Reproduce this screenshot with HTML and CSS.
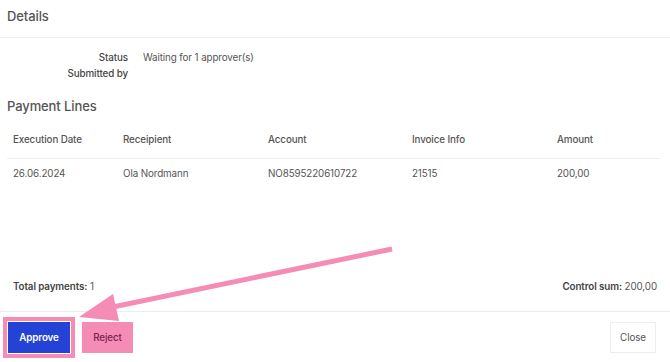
FILE: index.html
```html
<!DOCTYPE html>
<html>
<head>
<meta charset="utf-8">
<link rel="stylesheet" href="styles.css">
</head>
<body>
<div class="modal">
  <div class="modal-header"><h2 class="title">Details</h2></div>
  <div class="modal-body">
    <div class="details">
      <div class="dt">Status</div><div class="dd">Waiting for 1 approver(s)</div>
      <div class="dt">Submitted by</div><div class="dd"></div>
    </div>
    <h3 class="section-title">Payment Lines</h3>
    <table class="lines">
      <thead>
        <tr><th class="c1">Execution Date</th><th class="c2">Receipient</th><th class="c3">Account</th><th class="c4">Invoice Info</th><th class="c5">Amount</th></tr>
      </thead>
      <tbody>
        <tr><td>26.06.2024</td><td>Ola Nordmann</td><td>NO8595220610722</td><td>21515</td><td>200,00</td></tr>
      </tbody>
    </table>
    <div class="spacer"></div>
    <div class="totals">
      <div><span class="strong">Total payments:</span> 1</div>
      <div><span class="strong">Control sum:</span> 200,00</div>
    </div>
  </div>
  <div class="modal-footer">
    <div class="left">
      <button class="btn btn-approve">Approve</button>
      <button class="btn btn-reject">Reject</button>
    </div>
    <button class="btn btn-close">Close</button>
  </div>
  <svg class="arrow" width="670" height="362" viewBox="0 0 670 362">
    <line x1="392" y1="249" x2="108" y2="308" stroke="#f48cb6" stroke-width="5"/>
    <polygon points="79,317 113,294 119,321" fill="#f48cb6"/>
  </svg>
</div>
</body>
</html>
```
FILE: styles.css
```css
* { box-sizing: border-box; }
html, body { margin: 0; padding: 0; background: #fff; }
body {
  font-family: Inter, "Noto Sans", sans-serif;
  color: #555;
  font-size: 9.8px;
  letter-spacing: -0.1px;
  width: 670px;
  height: 362px;
  overflow: hidden;
}
.modal {
  position: relative;
  width: 670px;
  height: 362px;
  display: flex;
  flex-direction: column;
}
.modal-header {
  height: 38px;
  border-bottom: 1px solid #ededed;
  padding: 7px 7px 0 7px;
}
.title {
  margin: 0;
  font-size: 13px;
  line-height: 18px;
  font-weight: 500;
  color: #555;
  letter-spacing: -0.1px;
}
.modal-body {
  flex: 1;
  display: flex;
  flex-direction: column;
  padding: 13px 7px 0 7px;
}
.details {
  display: grid;
  grid-template-columns: 121px 1fr;
  column-gap: 15px;
  row-gap: 3px;
  line-height: 13px;
}
.dt { text-align: right; font-weight: 500; color: #444; }
.dd { color: #555; }
.section-title {
  margin: 17px 0 0 0;
  font-size: 13px;
  font-weight: 500;
  color: #555;
  letter-spacing: -0.1px;
  line-height: 18px;
}
.lines {
  border-collapse: collapse;
  margin-top: 7px;
  width: 653px;
}
.lines th, .lines td {
  text-align: left;
  padding: 0 6px;
  vertical-align: middle;
}
.lines th { font-weight: 500; color: #555; height: 36px; border-bottom: 1px solid #efefef; }
.lines td { color: #555; height: 30px; }
.c1 { width: 110px; }
.c2 { width: 145px; }
.c3 { width: 144px; }
.c4 { width: 145px; }
.spacer { flex: 1; }
.totals {
  display: flex;
  justify-content: space-between;
  padding: 0 6px;
  height: 31px;
  line-height: 13px;
  align-items: flex-start;
}
.strong { font-weight: 600; color: #444; }
.modal-footer {
  height: 51px;
  border-top: 1px solid #ededed;
  display: flex;
  justify-content: space-between;
  align-items: center;
  padding: 0 14px 0 8px;
}
.left { display: flex; gap: 12px; align-items: center; }
.btn {
  font-family: inherit;
  font-size: 9.8px;
  letter-spacing: -0.1px;
  height: 31px;
  border: none;
  padding: 0;
  cursor: pointer;
}
.btn-approve {
  background: #2443d6;
  color: #fff;
  font-weight: 600;
  width: 62px;
  box-shadow: 0 0 0 1px #fff, 0 0 0 5px #f48cb6;
}
.btn-reject {
  background: #f48cb6;
  color: #7a2350;
  font-weight: 500;
  width: 51px;
}
.btn-close {
  background: #fff;
  color: #555;
  border: 1px solid #eee;
  width: 46px;
}
.arrow {
  position: absolute;
  left: 0;
  top: 0;
  pointer-events: none;
}
```
